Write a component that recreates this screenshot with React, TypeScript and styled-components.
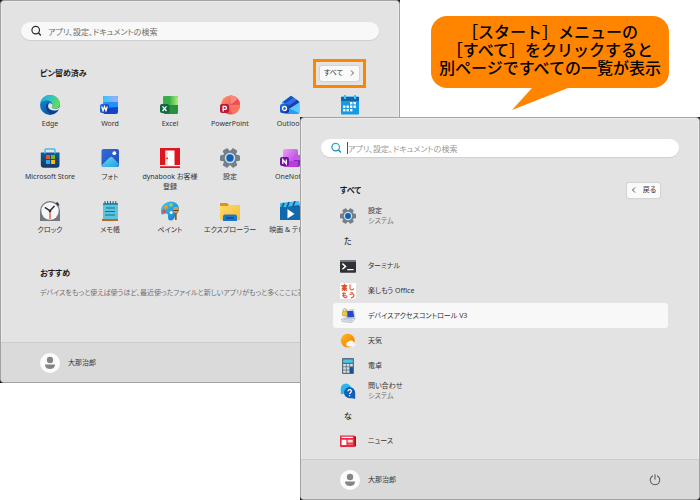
import React from "react";
import styled, { createGlobalStyle, css } from "styled-components";

const GlobalStyle = createGlobalStyle`
  *, *::before, *::after { box-sizing: border-box; }
  body {
    margin: 0;
    background: #ffffff;
    font-family: "Noto Sans", "Noto Sans CJK JP", sans-serif;
    font-size: 7px;
    line-height: 10px;
    color: #333333;
  }
  button, input {
    font: inherit;
    color: inherit;
    border: 0;
    padding: 0;
    margin: 0;
    background: none;
  }
  h2, p, ul { margin: 0; padding: 0; list-style: none; }
`;

const Desktop = styled.main`
  display: grid;
  grid-template-columns: 3fr 1fr 3fr;
  grid-template-rows: 117px 1fr 117px;
  min-height: 100vh;
  overflow: hidden;
`;

const Frame = styled.section<{ $front?: boolean }>`
  display: grid;
  min-width: 0;
  background: #1c1c1c;
  grid-column: ${(p) => (p.$front ? "2 / 4" : "1 / 3")};
  grid-row: ${(p) => (p.$front ? "2 / 4" : "1 / 3")};
`;

const Menu = styled.div`
  display: flex;
  flex-direction: column;
  min-width: 0;
  overflow: hidden;
  background: #e3e3e3;
  border: 1px solid #a2a2a2;
  border-radius: 4px;
  box-shadow: inset 0 0 0 1px #ececec;
  font-feature-settings: "palt";
`;

const Body = styled.div`
  flex: 1;
  padding: 21px 20px 0;
`;

const SearchBox = styled.label<{ $active?: boolean }>`
  display: flex;
  align-items: center;
  height: 18px;
  padding: 0 9px;
  border-radius: 9px;
  background: ${(p) => (p.$active ? "#ffffff" : "#f8f8f8")};
  box-shadow: 0 1px 1px #cfcfcf;
  font-size: 8px;
`;

const Caret = styled.span`
  width: 1px;
  height: 12px;
  margin-left: 5px;
  background: #555555;
`;

const SearchInput = styled.input<{ $active?: boolean }>`
  flex: 1;
  min-width: 0;
  height: 14px;
  margin-left: ${(p) => (p.$active ? "0" : "6px")};
  outline: none;
  font-feature-settings: "palt";
  &::placeholder {
    color: ${(p) => (p.$active ? "#989898" : "#6c6c6c")};
    opacity: 1;
  }
`;

const SectionHead = styled.div`
  display: flex;
  align-items: center;
  justify-content: space-between;
  height: 30px;
  margin-top: 18px;
  padding: 0 0 0 19px;
`;

const Heading = styled.h2`
  font-size: 8px;
  line-height: 12px;
  font-weight: 700;
  color: #1c1c1c;
`;

const Highlight = styled.div`
  display: flex;
  margin-right: 13px;
  padding: 4px;
  border: 3px solid #ff8400;
`;

const SmallButton = styled.button<{ $inset?: boolean }>`
  display: flex;
  align-items: center;
  justify-content: center;
  gap: 6px;
  height: 15px;
  padding: 0 4px;
  border-radius: 2px;
  background: #fafafa;
  box-shadow: 0 0 1px 1px #d2d2d2;
  font-feature-settings: "palt";
  ${(p) => p.$inset && css`margin-right: 19px;`}
`;

const TileStack = styled.div`
  margin: 7px -1px 0;
`;

const AppGrid = styled.ul`
  display: grid;
  grid-template-columns: repeat(6, minmax(0, 1fr));
  grid-auto-rows: 53px;
`;

const AppTile = styled.button`
  display: flex;
  flex-direction: column;
  align-items: center;
  gap: 4px;
  width: 100%;
  white-space: nowrap;
  font-feature-settings: "palt";
`;

const Recommended = styled.section`
  padding: 13px 19px 0;
  white-space: nowrap;
`;

const Hint = styled.p`
  margin-top: 9px;
  color: #707070;
`;

const Footer = styled.footer`
  display: flex;
  align-items: center;
  justify-content: space-between;
  height: 40px;
  padding: 0 38px 0 39px;
  border-top: 1px solid #cccccc;
  background: #dadada;
`;

const User = styled.button`
  display: flex;
  align-items: center;
  gap: 8px;
  font-feature-settings: "palt";
`;

const IconButton = styled.button`
  display: flex;
`;

const AppList = styled.ul`
  display: flex;
  flex-direction: column;
  margin: -2px 11px 0 12px;
`;

const Row = styled.button<{ $selected?: boolean }>`
  display: flex;
  align-items: center;
  gap: 12px;
  width: 100%;
  height: 25px;
  padding: 0 7px;
  border-radius: 3px;
  text-align: left;
  white-space: nowrap;
  background: ${(p) => (p.$selected ? "#f8f8f8" : "transparent")};
  font-feature-settings: "palt";
`;

const Letter = styled(Row)`
  padding: 0 11px;
  font-size: 8px;
  font-weight: 500;
`;

const RowText = styled.span`
  display: flex;
  flex-direction: column;
`;

const Sub = styled.span`
  color: #707070;
`;

const CalloutSlot = styled.aside`
  grid-column: 3;
  grid-row: 1;
  justify-self: center;
  margin-top: 16px;
`;

const Callout = styled.p`
  position: relative;
  padding: 6px 8px 12px;
  border-radius: 16px;
  background: #ff8400;
  color: #000000;
  font-family: "Noto Sans CJK JP", sans-serif;
  font-size: 16px;
  font-weight: 500;
  line-height: 18px;
  text-align: center;
  white-space: nowrap;
`;

const Tail = styled.svg`
  position: absolute;
  top: 100%;
  left: 34%;
  margin-top: -1px;
`;

const Defs = styled.svg`
  display: block;
  width: 0;
  height: 0;
`;

const Svg = ({ s = 20, children }: { s?: number; children: React.ReactNode }) => (
  <svg width={s} height={s} viewBox="0 0 20 20" aria-hidden="true">{children}</svg>
);

const Gradients = () => (
  <Defs aria-hidden="true">
    <defs>
      <linearGradient id="edgeTop" x1="0" y1="0" x2="1" y2="0.4">
        <stop offset="0" stopColor="#1ca4e0" /><stop offset="0.5" stopColor="#2fc2c5" /><stop offset="1" stopColor="#63dc55" />
      </linearGradient>
      <linearGradient id="edgeLow" x1="0" y1="0" x2="0.6" y2="1">
        <stop offset="0" stopColor="#1690dc" /><stop offset="1" stopColor="#0c4fa3" />
      </linearGradient>
      <linearGradient id="wordTop"><stop offset="0" stopColor="#35c9f5" /><stop offset="1" stopColor="#a7a9ff" /></linearGradient>
      <linearGradient id="wordBadge" x1="0" y1="0" x2="1" y2="1"><stop offset="0" stopColor="#2377ee" /><stop offset="1" stopColor="#0b2c9b" /></linearGradient>
      <linearGradient id="excelTop"><stop offset="0" stopColor="#35ad4f" /><stop offset="1" stopColor="#b4ec73" /></linearGradient>
      <linearGradient id="ppt" x1="0" y1="0" x2="1" y2="1"><stop offset="0" stopColor="#ff9668" /><stop offset="1" stopColor="#db3951" /></linearGradient>
      <linearGradient id="photo" x1="0" y1="0" x2="1" y2="1"><stop offset="0" stopColor="#326bda" /><stop offset="1" stopColor="#2748b5" /></linearGradient>
      <linearGradient id="hill" x1="0" y1="0" x2="1" y2="1"><stop offset="0" stopColor="#5ce1f7" /><stop offset="1" stopColor="#259ce0" /></linearGradient>
      <linearGradient id="store" x1="0" y1="0" x2="0" y2="1"><stop offset="0" stopColor="#105a9d" /><stop offset="1" stopColor="#183661" /></linearGradient>
      <linearGradient id="folder" x1="0" y1="0" x2="1" y2="1"><stop offset="0" stopColor="#ffda68" /><stop offset="1" stopColor="#f5bc35" /></linearGradient>
      <linearGradient id="note" x1="0" y1="0" x2="1" y2="1"><stop offset="0" stopColor="#ef9cff" /><stop offset="1" stopColor="#a436d2" /></linearGradient>
      <linearGradient id="palette" x1="0" y1="0" x2="1" y2="1"><stop offset="0" stopColor="#49c9f2" /><stop offset="1" stopColor="#0976c9" /></linearGradient>
      <linearGradient id="sun" x1="0" y1="0" x2="1" y2="1"><stop offset="0" stopColor="#ffbc16" /><stop offset="1" stopColor="#f27507" /></linearGradient>
      <linearGradient id="lens" x1="0" y1="1" x2="1" y2="0"><stop offset="0.3" stopColor="#1683d8" /><stop offset="1" stopColor="#35cb9b" /></linearGradient>
    </defs>
  </Defs>
);

const Badge = ({ fill, children }: { fill: string; children: React.ReactNode }) => (
  <>
    <rect x="0" y="9" width="9" height="9" rx="2" fill={fill} />
    <g fill="none" stroke="#fff" strokeWidth="1.3">{children}</g>
  </>
);

const EdgeIcon = () => (
  <Svg>
    <circle cx="10" cy="10" r="10" fill="url(#edgeLow)" />
    <path d="M.3 8C1.4 3 5.300 0 10 0c6 0 10 4.300 10 8.600 0 3.300-2.400 5.200-5.200 5.200-2 0-3.200-.8-3.100-1.500.1-.5.8-.9.8-2.300C12.500 7.500 10 5.600 6.800 5.600 4 5.600 1.500 6.800.3 8z" fill="url(#edgeTop)" />
    <path d="M7.200 8.500C4.800 11.500 6 17 11 19.200c3.300-.3 6-2 7.700-4.700-5 2.100-9.500.4-10.300-2.500-.4-1.500.1-2.700 1-3.300-.7-.3-1.600-.4-2.200-.2z" fill="#103f83" />
    <path d="M8.800 8.700c-1.200 2-1 4.300 1.300 5.800 2.400 1.500 6.400 1.300 9.300-.3l.6-2.700c-1.200 1.500-3.200 2.300-5.200 2.300-2 0-3.200-.8-3.100-1.500.1-.5.8-.9.8-2.300 0-1.200-2.200-2.200-3.700-1.300z" fill="#e3e3e3" />
  </Svg>
);
const WordIcon = () => (
  <Svg>
    <rect x="3" y="1" width="15" height="18" rx="2" fill="#1146cc" />
    <path d="M3 13V3a2 2 0 0 1 2-2h11a2 2 0 0 1 2 2v9z" fill="#2491fa" />
    <path d="M3 8V3a2 2 0 0 1 2-2h11a2 2 0 0 1 2 2v4H5z" fill="url(#wordTop)" />
    <Badge fill="url(#wordBadge)"><path d="M1.700 11.500 3 15.700l1.500-4 1.500 4 1.300-4.200" /></Badge>
  </Svg>
);
const ExcelIcon = () => (
  <Svg>
    <rect x="3" y="1" width="15" height="18" rx="2" fill="#18823c" />
    <path d="M3 10V3a2 2 0 0 1 2-2h6v9z" fill="#3cac49" />
    <path d="M11 1h5a2 2 0 0 1 2 2v7h-9V3z" fill="url(#excelTop)" />
    <path d="M10 10h8v7a2 2 0 0 1-2 2h-6z" fill="#29903f" />
    <Badge fill="#0f6840"><path d="m2.500 11.300 4 4.700m0-4.700-4 4.700" /></Badge>
  </Svg>
);
const PowerPointIcon = () => (
  <Svg>
    <circle cx="10.500" cy="10" r="9.500" fill="url(#ppt)" />
    <path d="M10 .5c5-.2 9.500 3.200 10 8.500L10 10z" fill="#f04f51" />
    <path d="m10 1 .8 8.500 7.200-5.800A9 9 0 0 0 10 1z" fill="#f88b7e" />
    <path d="M10 10h10c0 5-3.500 9-8 9.400z" fill="#ff765d" />
    <Badge fill="#bd1838"><path d="M3.200 16.400v-5H5a1.500 1.500 0 0 1 0 3H3.200" /></Badge>
  </Svg>
);
const OutlookIcon = () => (
  <Svg>
    <path d="m2 7 9-6.300L19.500 7v10a2 2 0 0 1-2 2H5a3 3 0 0 1-3-3z" fill="#38b8f3" />
    <path d="m3 7 8-6.300 3 2L5 9z" fill="#164fc1" /><path d="m5 9 9-6.300 3 2L7 12z" fill="#316be8" />
    <path d="m7 12 10-7.300L19.500 7 9 14z" fill="#2037ad" />
    <path d="M9 14 19.500 8v9a2 2 0 0 1-2 2H7z" fill="#5ac7ff" /><path d="m6 12 13 6-1.500 1H6z" fill="#299cf0" />
    <Badge fill="url(#wordBadge)"><circle cx="4.500" cy="13.500" r="2" /></Badge>
  </Svg>
);
const CalendarIcon = () => (
  <Svg>
    <rect x="1" y="1.500" width="18" height="18" rx="1" fill="#169ae5" /><path d="M1 2h18v4H1z" fill="#1363ae" />
    <path d="M4 0h2v4H4zm10 0h2v4h-2z" fill="#3cc5f4" />
    <g fill="#fff">{[[10, 7], [13.500, 7], [3, 10.500], [6.500, 10.500], [10, 10.500], [13.500, 10.500], [3, 14], [6.500, 14], [10, 14]].map(([x, y]) => <rect key={`${x}-${y}`} x={x} y={y} width="2.400" height="2.400" />)}</g>
  </Svg>
);
const StoreIcon = () => (
  <Svg>
    <path d="M.8 4.500h18.700v12.300a3 3 0 0 1-3 3H3.800a3 3 0 0 1-3-3z" fill="url(#store)" />
    <path d="M5 5.500V2a1 1 0 0 1 1-1h8a1 1 0 0 1 1 1v3.500" fill="none" stroke="#43bfee" strokeWidth="1.500" />
    <path d="M6 7h4v4H6z" fill="#f25022" /><path d="M11 7h4v4h-4z" fill="#7fba00" /><path d="M6 12h4v4H6z" fill="#27a9ed" /><path d="M11 12h4v4h-4z" fill="#ffb900" />
  </Svg>
);
const PhotoIcon = () => (
  <Svg>
    <rect x="1.500" y="1" width="17.500" height="18" rx="2" fill="url(#photo)" />
    <path d="M2 17 9.800 9.300a2 2 0 0 1 2.700 0l6 6.200V17a2 2 0 0 1-2 2h-13a2 2 0 0 1-1.500-2z" fill="url(#hill)" />
    <circle cx="14.300" cy="5.200" r="1.900" fill="#fff" />
  </Svg>
);
const DynabookIcon = () => (
  <Svg>
    <path d="M0 0h20v17.300H0z" fill="#df151e" /><path d="M5.500 2.500h9v14.800h-9z" fill="#fff" />
    <path d="M5.500 2.500 8 4v14l-2.500-.7z" fill="#f3d9da" /><circle cx="7" cy="10.300" r=".9" fill="#df151e" />
    <path d="M0 17.300h20v1H0z" fill="#fff" /><path d="M0 18.300h20V20H0z" fill="#df151e" />
  </Svg>
);
const GearIcon = ({ s = 20 }: { s?: number }) => (
  <Svg s={s}>
    <g fill="#73808b">{[30, 90, 150].map((a) => <rect key={a} x="7" y="0" width="6" height="20" rx="1.500" transform={`rotate(${a} 10 10)`} />)}<circle cx="10" cy="10" r="7.500" /></g>
    <circle cx="10" cy="10" r="5.200" fill="#d5dde3" /><circle cx="10" cy="10" r="3.700" fill="#0d61b6" />
  </Svg>
);
const OneNoteIcon = () => (
  <Svg>
    <rect x="3" y="1" width="15" height="18" rx="2" fill="url(#note)" /><path d="M14 7h6v5h-6z" fill="#c458e9" /><path d="M14 12h6v5a2 2 0 0 1-2 2h-4z" fill="#8e25bd" />
    <path d="M3 13h15v4a2 2 0 0 1-2 2H5a2 2 0 0 1-2-2z" fill="#b83edb" />
    <Badge fill="#7213a4"><path d="M2.800 16v-4.300L6.300 16v-4.500" /></Badge>
  </Svg>
);
const ClockIcon = () => (
  <Svg>
    <path d="M0 10a10 10 0 0 1 20 0v10H0z" fill="#717a83" /><path d="m15.500 2 2-1 2 3-1.500 1z" fill="#30373e" />
    <circle cx="10" cy="10" r="8.700" fill="#f7f7f7" />
    <path d="M10 9.500V18" stroke="#e6502c" strokeWidth="1.300" /><path d="M4.800 6.300 10 9.800 14.500 5" fill="none" stroke="#2c3034" strokeWidth="1.500" />
    <circle cx="10" cy="10" r="1.300" fill="#2c3034" />
  </Svg>
);
const MemoIcon = () => (
  <Svg>
    <path d="M2 18h16v2H2z" fill="#b96730" /><rect x="3" y="2" width="15" height="16" fill="#5cc5dd" /><path d="M3 2h15v2H3z" fill="#2895b2" />
    <path d="M5 0v3m2.700-3v3m2.700-3v3m2.700-3v3m2.700-3v3" stroke="#245d70" strokeWidth="1" />
    <path d="M6 7h9M5 10.500h10M5 14h10" stroke="#186f8e" strokeWidth="1.100" />
  </Svg>
);
const PaintIcon = () => (
  <Svg>
    <path d="M1 10C1 4 6 .5 11 .5c4.500 0 8 3 8 7.500 0 5-3.500 4.500-4 7-.4 2.500-2 4.500-4.500 4.500-2 0-2.500-1.500-2.500-3s.5-4-2-4-2 1-3.500 1S1 12 1 10z" fill="url(#palette)" />
    <circle cx="6" cy="6" r="2" fill="#f39a27" /><circle cx="11" cy="4" r="1.700" fill="#9bd852" /><circle cx="4" cy="10.500" r="1.700" fill="#e75035" /><circle cx="11.200" cy="11.500" r="1.600" fill="#edf8ff" />
    <path d="M15.800 11v8" stroke="#995621" strokeWidth="1.800" /><path d="M13.500 6h4.800l.5 4-1.800 2h-2.400l-1.500-2z" fill="#d69a59" /><path d="M13.500 9.500h4.800" stroke="#654226" />
  </Svg>
);
const FolderIcon = () => (
  <Svg>
    <path d="M0 3a1 1 0 0 1 1-1h6l2 2h10a1 1 0 0 1 1 1v13H0z" fill="#db9413" /><path d="M0 5h8l1-1h10a1 1 0 0 1 1 1v14H1a1 1 0 0 1-1-1z" fill="url(#folder)" />
    <path d="M3 20v-4.500a2 2 0 0 1 2-2h10a2 2 0 0 1 2 2V20z" fill="#1c75c9" /><path d="M6 17h8" stroke="#0c4b91" strokeWidth="1.500" />
  </Svg>
);
const MovieIcon = () => (
  <Svg>
    <path d="M0 5 18 .5 20 6v13H0z" fill="#0f5797" /><path d="M0 2 19 0l1 4L0 7z" fill="#39bff0" /><path d="m4 2-2 4m7-5L7 6m8-6-2 5" stroke="#165d98" strokeWidth="1.800" />
    <path d="M0 6h20v13H0z" fill="#1169ad" /><path d="m7.500 8 7 5-7 4.500z" fill="#fff" />
  </Svg>
);
const TerminalIcon = () => (
  <Svg s={16}>
    <rect x="0" y="2.500" width="20" height="16" rx="1" fill="#2e3236" /><path d="M0 5V3.500a1 1 0 0 1 1-1h18a1 1 0 0 1 1 1V5z" fill="#71777d" />
    <path d="m3 7 4 3.500L3 14" fill="none" stroke="#fff" strokeWidth="1.800" /><path d="M9 14.500h8" stroke="#fff" strokeWidth="1.800" />
  </Svg>
);
const EnjoyIcon = () => (
  <Svg s={16}>
    <rect width="20" height="20" fill="#fff" />
    <g fill="none" stroke="#e34d29" strokeWidth="1.300">
      <path d="M3.500 3h4v3h-4zm0 1.500h4M5.500 1v6M2 7.200h7M5.500 7v3M1.500 3l1 1m6.500-1-1 1M5 7.500 2.500 9.500M6 7.500l2.500 2" />
      <path d="M12.500 2v5c0 2.500 3.500 2 5 0M5 11.500c-.5 3-1.500 7 1.500 7 2 0 2.500-1.500 2-3M2.500 13.500h5M2.500 16h5M13 11.800l3.500.7M12 14.500c3-1 5.500-1 5.500.8 0 2-2 3-4 3.500" />
    </g>
  </Svg>
);
const DeviceIcon = () => (
  <Svg s={16}>
    <path d="m6 3 11-1 1.500 10-10 1z" fill="#e6edf5" stroke="#93a1b0" strokeWidth=".6" /><path d="m8 4 8.500-.7 1.200 8-8.300.7z" fill="#2747cf" />
    <path d="m2 14 6-2 11 1-4 5-12-1z" fill="#dfe5ec" stroke="#8d9aaa" strokeWidth=".7" /><path d="m5 14.500 10 1M8 13l7 .7" stroke="#aeb9c6" />
    <path d="M4 5V3a2 2 0 0 1 4 0v2" fill="none" stroke="#bda457" strokeWidth="1.200" /><rect x="3" y="4.500" width="6" height="5.500" rx="1" fill="#f4c541" stroke="#be8f1c" strokeWidth=".6" />
  </Svg>
);
const WeatherIcon = () => (
  <Svg s={16}>
    <circle cx="9.700" cy="9.500" r="8.700" fill="url(#sun)" /><path d="M11 17a3 3 0 0 1-.5-6 4 4 0 0 1 7 .8A2.700 2.700 0 0 1 17 17z" fill="#f9f9f9" />
  </Svg>
);
const CalcIcon = () => (
  <Svg s={16}>
    <rect x="2.500" y="0" width="15" height="20" rx="1" fill="#5c6c79" /><path d="M4 2h12v4H4z" fill="#43c9f0" />
    <g fill="#d6dfe6">{[8, 12, 16].flatMap((y) => [4, 8.300].map((x) => <rect key={`${x}-${y}`} x={x} y={y - 0.500} width="3.300" height="3" />))}<rect x="12.600" y="7.500" width="3.400" height="3" /></g>
    <path d="M12.600 11.500H16V19h-3.400z" fill="#10529b" />
  </Svg>
);
const HelpIcon = () => (
  <Svg s={16}>
    <path d="M1 14V7a6.500 6.500 0 1 1 6.500 6.500H5z" fill="#2bb7ee" /><path d="M19 20v-8a7 7 0 1 0-7 7h3z" fill="#1160b8" />
    <path d="M10 10.500a2.100 2.100 0 1 1 3.200 1.700c-.8.500-1.200.8-1.200 1.700M12 15v1.700" fill="none" stroke="#fff" strokeWidth="1.600" />
  </Svg>
);
const NewsIcon = () => (
  <Svg s={16}>
    <path d="M3 4h17v13H3z" fill="#a60f22" /><path d="M0 3h18v14.500H1a1 1 0 0 1-1-1z" fill="#e92b3f" />
    <path d="M2 5.500h14" stroke="#fff" strokeWidth="1.400" /><path d="M2 8.500h6V15H2z" fill="#fff" /><path d="M9.500 8.500H16V12H9.500z" fill="#fbdadd" /><path d="M9.500 14H16" stroke="#ff97a0" />
  </Svg>
);
const SearchIcon = ({ active }: { active?: boolean }) => (
  <Svg s={12}>
    <circle cx="9.500" cy="8.500" r="6.300" fill="none" stroke={active ? "url(#lens)" : "#2b2b2b"} strokeWidth="2" />
    <path d="m14 13 4 4.500" stroke={active ? "#1683d8" : "#2b2b2b"} strokeWidth="2.200" />
  </Svg>
);
const Chevron = ({ left }: { left?: boolean }) => (
  <svg width="6" height="8" viewBox="0 0 6 8" aria-hidden="true"><path d={left ? "M4 1.500 1.500 4 4 6.500" : "M2 1.500 4.500 4 2 6.500"} fill="none" stroke="#555" /></svg>
);
const Avatar = () => (
  <Svg><circle cx="10" cy="10" r="10" fill="#fcfcfc" /><circle cx="10" cy="7" r="3.200" fill="#858585" /><path d="M5.500 11.500h9c.5 0 .7.300.5 1C14.500 15 12.500 16 10 16s-4.500-1-5-3.500c-.2-.7 0-1 .5-1z" fill="#858585" /></Svg>
);
const PowerIcon = () => (
  <Svg s={12}><path d="M6.500 2.800a8 8 0 1 0 7 0M10 .5V9" fill="none" stroke="#555" strokeWidth="1.700" /></Svg>
);

type App = { label: React.ReactNode; name: string; icon: React.ReactNode };
const apps: App[] = [
  { name: "Edge", label: "Edge", icon: <EdgeIcon /> },
  { name: "Word", label: "Word", icon: <WordIcon /> },
  { name: "Excel", label: "Excel", icon: <ExcelIcon /> },
  { name: "PowerPoint", label: "PowerPoint", icon: <PowerPointIcon /> },
  { name: "Outlook", label: "Outlook", icon: <OutlookIcon /> },
  { name: "カレンダー", label: null, icon: <CalendarIcon /> },
  { name: "Microsoft Store", label: "Microsoft Store", icon: <StoreIcon /> },
  { name: "フォト", label: "フォト", icon: <PhotoIcon /> },
  { name: "dynabook お客様登録", label: <>dynabook お客様<br />登録</>, icon: <DynabookIcon /> },
  { name: "設定", label: "設定", icon: <GearIcon /> },
  { name: "OneNote", label: "OneNote", icon: <OneNoteIcon /> },
];
const moreApps: App[] = [
  { name: "クロック", label: "クロック", icon: <ClockIcon /> },
  { name: "メモ帳", label: "メモ帳", icon: <MemoIcon /> },
  { name: "ペイント", label: "ペイント", icon: <PaintIcon /> },
  { name: "エクスプローラー", label: "エクスプローラー", icon: <FolderIcon /> },
  { name: "映画 & テレビ", label: "映画 & テレビ", icon: <MovieIcon /> },
];

type Entry = { text: string; sub?: string; icon?: React.ReactNode; selected?: boolean };
const entries: Entry[] = [
  { text: "設定", sub: "システム", icon: <GearIcon s={16} /> },
  { text: "た" },
  { text: "ターミナル", icon: <TerminalIcon /> },
  { text: "楽しもう Office", icon: <EnjoyIcon /> },
  { text: "デバイスアクセスコントロール V3", icon: <DeviceIcon />, selected: true },
  { text: "天気", icon: <WeatherIcon /> },
  { text: "電卓", icon: <CalcIcon /> },
  { text: "問い合わせ", sub: "システム", icon: <HelpIcon /> },
  { text: "な" },
  { text: "ニュース", icon: <NewsIcon /> },
];

const placeholder = "アプリ、設定、ドキュメントの検索";

const Search = ({ active }: { active?: boolean }) => (
  <SearchBox $active={active}>
    <SearchIcon active={active} />
    {active && <Caret />}
    <SearchInput $active={active} type="text" aria-label={placeholder} placeholder={placeholder} />
  </SearchBox>
);

const Tiles = ({ items }: { items: App[] }) => (
  <AppGrid>
    {items.map((a) => (
      <li key={a.name}><AppTile type="button" aria-label={a.name}>{a.icon}<span>{a.label}</span></AppTile></li>
    ))}
  </AppGrid>
);

const PinnedMenu = () => (
  <Frame>
    <Menu>
      <Body>
        <Search />
        <SectionHead>
          <Heading>ピン留め済み</Heading>
          <Highlight><SmallButton type="button">すべて<Chevron /></SmallButton></Highlight>
        </SectionHead>
        <TileStack><Tiles items={apps} /><Tiles items={moreApps} /></TileStack>
        <Recommended>
          <Heading>おすすめ</Heading>
          <Hint>デバイスをもっと使えば使うほど、最近使ったファイルと新しいアプリがもっと多くここに表示されます</Hint>
        </Recommended>
      </Body>
      <Footer><User type="button"><Avatar />大那治郎</User></Footer>
    </Menu>
  </Frame>
);

const AllAppsMenu = () => (
  <Frame $front>
    <Menu>
      <Body>
        <Search active />
        <SectionHead>
          <Heading>すべて</Heading>
          <SmallButton type="button" $inset><Chevron left />戻る</SmallButton>
        </SectionHead>
        <AppList>
          {entries.map((e) => (
            <li key={e.text}>
              {e.icon ? (
                <Row type="button" $selected={e.selected}>
                  {e.icon}
                  <RowText><span>{e.text}</span>{e.sub && <Sub>{e.sub}</Sub>}</RowText>
                </Row>
              ) : <Letter type="button">{e.text}</Letter>}
            </li>
          ))}
        </AppList>
      </Body>
      <Footer>
        <User type="button"><Avatar />大那治郎</User>
        <IconButton type="button" aria-label="電源"><PowerIcon /></IconButton>
      </Footer>
    </Menu>
  </Frame>
);

export default function App() {
  return (
    <>
      <GlobalStyle />
      <Gradients />
      <Desktop>
        <PinnedMenu />
        <AllAppsMenu />
        <CalloutSlot>
          <Callout>
            ［スタート］メニューの<br />［すべて］をクリックすると<br />別ページですべての一覧が表示
            <Tail width="56" height="23" viewBox="0 0 56 23" aria-hidden="true"><path d="M20 0h36v1L0 23 20 1z" fill="#ff8400" /></Tail>
          </Callout>
        </CalloutSlot>
      </Desktop>
    </>
  );
}
